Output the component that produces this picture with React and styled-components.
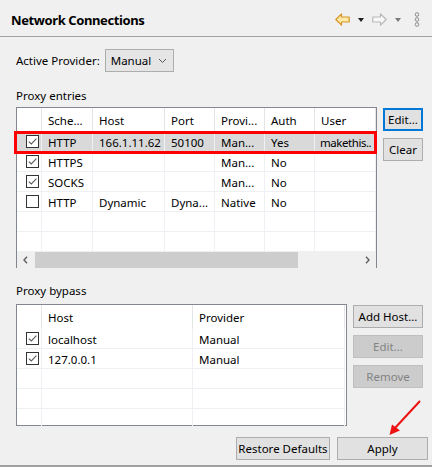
import React from "react";
import styled, { createGlobalStyle } from "styled-components";

const GlobalStyle = createGlobalStyle`
  html, body {
    margin: 0;
    padding: 0;
    background: #f0f0f0;
  }
  body {
    font-family: "Noto Sans", "Open Sans", sans-serif;
    font-size: 11.5px;
    color: #000;
  }
`;

const entryColumns = "25px 51px 72px 50px 50px 50px 61px";
const bypassColumns = "25px 151px 152px";

const entries = [
  { checked: true, cells: ["HTTP", "166.1.11.62", "50100", "Man...", "Yes", "makethis.."], selected: true },
  { checked: true, cells: ["HTTPS", "", "", "Man...", "No", ""] },
  { checked: true, cells: ["SOCKS", "", "", "Man...", "No", ""] },
  { checked: false, cells: ["HTTP", "Dynamic", "Dyna...", "Native", "No", ""] },
  { empty: true, cells: ["", "", "", "", "", ""] },
  { empty: true, cells: ["", "", "", "", "", ""] },
];

const bypass = [
  { checked: true, cells: ["localhost", "Manual"] },
  { checked: true, cells: ["127.0.0.1", "Manual"] },
  { empty: true, cells: ["", ""] },
  { empty: true, cells: ["", ""] },
  { empty: true, cells: ["", ""] },
];

const App = () => {
  return (
    <Page>
      <GlobalStyle />
      <Header>
        <Title>Network Connections</Title>
        <Toolbar>
          <svg width="15" height="13" viewBox="0 0 15 13">
            <path
              d="M0.8 6.5 L6.5 0.8 L6.5 4 L14.2 4 L14.2 9 L6.5 9 L6.5 12.2 Z"
              fill="#fde8a6"
              stroke="#d8962a"
              strokeWidth="1.2"
              strokeLinejoin="round"
            />
          </svg>
          <Caret $muted={false} />
          <svg width="15" height="13" viewBox="0 0 15 13">
            <path
              d="M14.2 6.5 L8.5 0.8 L8.5 4 L0.8 4 L0.8 9 L8.5 9 L8.5 12.2 Z"
              fill="#f8f8f8"
              stroke="#b8b8b8"
              strokeWidth="1.2"
              strokeLinejoin="round"
            />
          </svg>
          <Caret $muted />
          <Dots width="6" height="15" viewBox="0 0 6 15">
            <circle cx="3" cy="2.5" r="1.8" fill="none" stroke="#8a8a8a" strokeWidth="1" />
            <circle cx="3" cy="7.5" r="1.8" fill="none" stroke="#8a8a8a" strokeWidth="1" />
            <circle cx="3" cy="12.5" r="1.8" fill="none" stroke="#8a8a8a" strokeWidth="1" />
          </Dots>
        </Toolbar>
      </Header>

      <Body>
        <ProviderRow>
          <span>Active Provider:</span>
          <Select>
            <span>Manual</span>
            <svg width="9" height="6" viewBox="0 0 9 6">
              <path d="M1 1 L4.5 4.5 L8 1" fill="none" stroke="#555" strokeWidth="1" />
            </svg>
          </Select>
        </ProviderRow>

        <SectionLabel $top={16} $bottom={3}>Proxy entries</SectionLabel>
        <SectionRow>
          <Table $width={361} $height={161}>
            <HeadRow $cols={entryColumns}>
              <HeadCell />
              <HeadCell>Sche...</HeadCell>
              <HeadCell>Host</HeadCell>
              <HeadCell>Port</HeadCell>
              <HeadCell>Provi...</HeadCell>
              <HeadCell>Auth</HeadCell>
              <HeadCell>User</HeadCell>
            </HeadRow>
            {entries.map((row, i) => (
              <Row key={i} $cols={entryColumns} $selected={row.selected}>
                <CheckCell>{!row.empty && <CheckBox checked={row.checked} />}</CheckCell>
                {row.cells.map((c, j) => (
                  <Cell key={j} $tight={j === 5}>
                    {c}
                  </Cell>
                ))}
              </Row>
            ))}
            <ScrollBar>
              <ScrollArrow>
                <svg width="5" height="8" viewBox="0 0 5 8">
                  <path d="M4 0.8 L1 4 L4 7.2" fill="none" stroke="#606060" strokeWidth="1.4" />
                </svg>
              </ScrollArrow>
              <Track>
                <Thumb />
              </Track>
              <ScrollArrow>
                <svg width="5" height="8" viewBox="0 0 5 8">
                  <path d="M1 0.8 L4 4 L1 7.2" fill="none" stroke="#606060" strokeWidth="1.4" />
                </svg>
              </ScrollArrow>
            </ScrollBar>
            <Highlight />
          </Table>
          <ButtonColumn>
            <Button $width={40} $focused>
              Edit...
            </Button>
            <Button $width={40}>Clear</Button>
          </ButtonColumn>
        </SectionRow>

        <SectionLabel $top={15} $bottom={5}>Proxy bypass</SectionLabel>
        <SectionRow>
          <Table $width={331} $height={122}>
            <HeadRow $cols={bypassColumns}>
              <HeadCell />
              <HeadCell>Host</HeadCell>
              <HeadCell>Provider</HeadCell>
            </HeadRow>
            {bypass.map((row, i) => (
              <Row key={i} $cols={bypassColumns}>
                <CheckCell>{!row.empty && <CheckBox checked={row.checked} />}</CheckCell>
                {row.cells.map((c, j) => (
                  <Cell key={j}>{c}</Cell>
                ))}
              </Row>
            ))}
          </Table>
          <ButtonColumn>
            <Button $width={70}>Add Host...</Button>
            <Button $width={70} disabled>
              Edit...
            </Button>
            <Button $width={70} disabled>
              Remove
            </Button>
          </ButtonColumn>
        </SectionRow>
      </Body>

      <Footer>
        <Button $width={94}>Restore Defaults</Button>
        <Button $width={91}>Apply</Button>
      </Footer>
      <BottomRule />

      <Annotation width="432" height="467" viewBox="0 0 432 467">
        <line x1="420" y1="401" x2="395" y2="428" stroke="#ee1111" strokeWidth="2" />
        <polygon points="389.5,435 392,424.5 400,430.5" fill="#ee1111" />
      </Annotation>
    </Page>
  );
};

const CheckBox = ({ checked }) => (
  <Box>
    {checked && (
      <svg width="11" height="11" viewBox="0 0 11 11">
        <path d="M1.8 5.6 L4.3 8 L9.4 2.6" fill="none" stroke="#5c5c5c" strokeWidth="1.1" />
      </svg>
    )}
  </Box>
);

export default App;

const Page = styled.div`
  position: relative;
  width: 432px;
  height: 467px;
  background: #f0f0f0;
  overflow: hidden;
  display: flex;
  flex-direction: column;
`;

const Header = styled.div`
  height: 36px;
  border-bottom: 1px solid #a0a0a0;
  display: flex;
  align-items: center;
  justify-content: space-between;
  padding: 0 12px 0 11px;
  flex-shrink: 0;
`;

const Title = styled.h1`
  margin: 0;
  font-size: 13px;
  font-weight: bold;
  letter-spacing: -0.4px;
  padding-top: 4px;
`;

const Toolbar = styled.div`
  display: flex;
  align-items: center;
  gap: 8px;
  padding-top: 3px;
`;

const Dots = styled.svg`
  margin-left: 5px;
`;

const Caret = styled.span`
  width: 0;
  height: 0;
  border-left: 3.5px solid transparent;
  border-right: 3.5px solid transparent;
  border-top: 4px solid ${(p) => (p.$muted ? "#7a7a7a" : "#1e1e1e")};
`;

const Body = styled.div`
  padding: 12px 10px 0 16px;
  display: flex;
  flex-direction: column;
`;

const ProviderRow = styled.div`
  display: flex;
  align-items: center;
  gap: 5px;
  height: 23px;
`;

const Select = styled.div`
  box-sizing: border-box;
  width: 69px;
  height: 23px;
  border: 1px solid #adadad;
  background: #e5e5e5;
  display: flex;
  align-items: center;
  justify-content: space-between;
  padding: 0 6px 0 5px;
`;

const SectionLabel = styled.div`
  margin-top: ${(p) => p.$top}px;
  margin-bottom: ${(p) => p.$bottom}px;
  line-height: 16px;
  height: 16px;
`;

const SectionRow = styled.div`
  display: flex;
  align-items: flex-start;
  gap: 6px;
`;

const Table = styled.div`
  position: relative;
  box-sizing: border-box;
  width: ${(p) => p.$width}px;
  height: ${(p) => p.$height}px;
  border: 1px solid #828790;
  background: #fff;
  display: flex;
  flex-direction: column;
  flex-shrink: 0;
`;

const HeadRow = styled.div`
  display: grid;
  grid-template-columns: ${(p) => p.$cols};
  height: 24px;
  flex-shrink: 0;
`;

const HeadCell = styled.div`
  border-right: 1px solid #e5e5e5;
  padding: 1px 0 0 6px;
  line-height: 24px;
  white-space: nowrap;
  overflow: hidden;
`;

const Row = styled.div`
  display: grid;
  grid-template-columns: ${(p) => p.$cols};
  height: 20px;
  box-sizing: border-box;
  border-bottom: 1px solid #eef0f3;
  background: ${(p) => (p.$selected ? "#d9d9d9" : "transparent")};
  flex-shrink: 0;
  overflow: hidden;
`;

const Cell = styled.div`
  border-right: 1px solid #eef0f3;
  padding: 1px 0 0 ${(p) => (p.$tight ? 5 : 6)}px;
  letter-spacing: ${(p) => (p.$tight ? "-0.45px" : "normal")};
  line-height: 19px;
  white-space: nowrap;
  overflow: hidden;
`;

const CheckCell = styled(Cell)`
  padding: 0 0 0 9px;
  display: flex;
  align-items: center;
`;

const Box = styled.span`
  box-sizing: border-box;
  width: 13px;
  height: 13px;
  border: 1px solid #333;
  background: #fff;
  display: flex;
  align-items: center;
  justify-content: center;
`;

const ScrollBar = styled.div`
  margin-top: auto;
  height: 16px;
  display: flex;
  background: #f0f0f0;
  flex-shrink: 0;
`;

const ScrollArrow = styled.div`
  width: 17px;
  display: flex;
  align-items: center;
  justify-content: center;
`;

const Track = styled.div`
  flex: 1;
  display: flex;
`;

const Thumb = styled.div`
  width: 263px;
  margin-left: 1px;
  background: #cdcdcd;
`;

const Highlight = styled.div`
  position: absolute;
  left: -3px;
  top: 23px;
  width: 363px;
  height: 23px;
  box-sizing: border-box;
  border: 3px solid #ff0000;
  pointer-events: none;
`;

const ButtonColumn = styled.div`
  display: flex;
  flex-direction: column;
  gap: 7px;
  padding-top: 1px;
`;

const Button = styled.button`
  box-sizing: border-box;
  width: ${(p) => p.$width}px;
  height: 23px;
  padding: 0;
  font-family: inherit;
  font-size: 11.5px;
  color: #000;
  background: #e1e1e1;
  border: ${(p) => (p.$focused ? "2px solid #0078d7" : "1px solid #adadad")};
  white-space: nowrap;

  &:disabled {
    background: #cccccc;
    border-color: #bfbfbf;
    color: #838383;
  }
`;

const Footer = styled.div`
  display: flex;
  justify-content: flex-end;
  gap: 7px;
  padding-right: 4px;
  margin-top: 11px;
`;

const BottomRule = styled.div`
  margin-top: auto;
  height: 2px;
  background: #a0a0a0;
`;

const Annotation = styled.svg`
  position: absolute;
  left: 0;
  top: 0;
  pointer-events: none;
`;
